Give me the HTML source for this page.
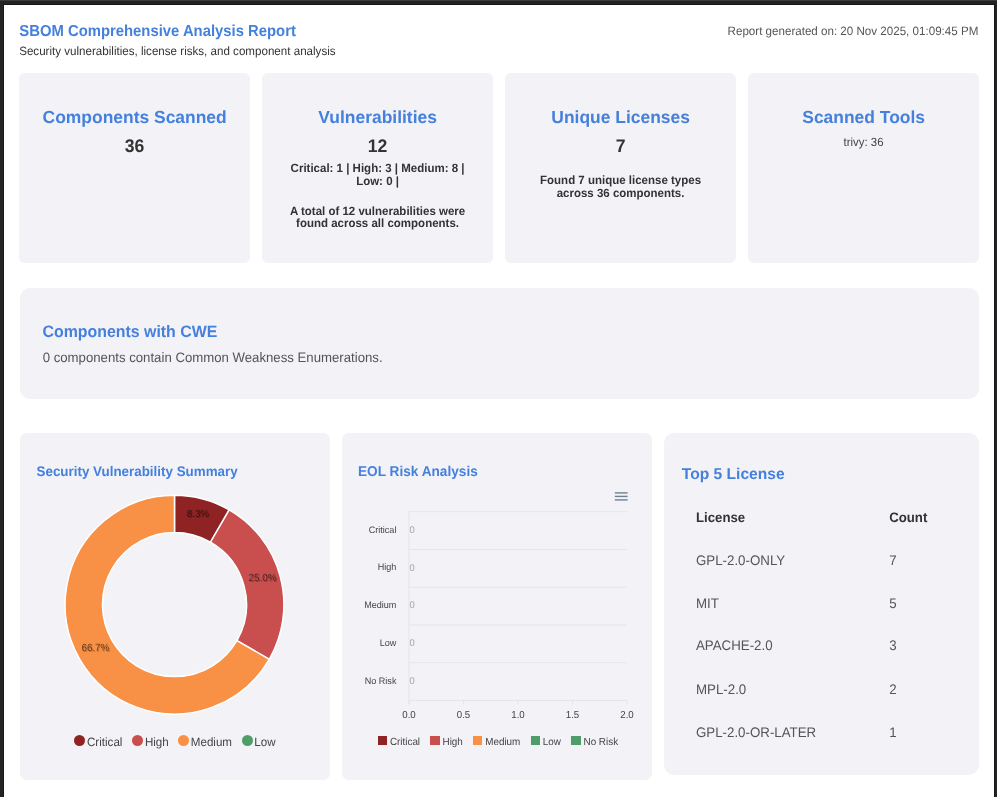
<!DOCTYPE html>
<html><head><meta charset="utf-8"><title>SBOM Comprehensive Analysis Report</title>
<style>
html,body{margin:0;padding:0;}
body{width:997px;height:797px;position:relative;overflow:hidden;background:#232323;font-family:"Liberation Sans",sans-serif;}
.page{position:absolute;left:4px;top:5px;width:990px;height:792px;background:#fff;}
.t{position:absolute;line-height:1;white-space:nowrap;text-rendering:geometricPrecision;}
svg text{text-rendering:geometricPrecision;}
.r{position:absolute;}
.s{position:absolute;left:0;top:0;}
#w{position:absolute;left:0;top:0;width:997px;height:797px;will-change:transform;}
.fl{position:absolute;background:#161616;}
</style></head><body>
<div class="fl" style="left:0;top:0;width:997px;height:1px;background:#3a3a3a"></div>
<div class="fl" style="left:3px;top:4px;width:992px;height:1px"></div>
<div class="fl" style="left:3px;top:4px;width:1px;height:793px"></div>
<div class="fl" style="left:994px;top:4px;width:1px;height:793px"></div>
<div class="page"></div>
<div id="w">
<div class="t" id="t0" style="left:19.30px;top:25.13px;font-size:14.85px;font-weight:bold;color:#4580dc;transform:scaleY(1.07);transform-origin:0 12.57px;">SBOM Comprehensive Analysis Report</div>
<div class="t" id="t1" style="left:19.20px;top:45.88px;font-size:11.6px;font-weight:normal;color:#333;transform:scaleY(1.04);transform-origin:0 9.82px;">Security vulnerabilities, license risks, and component analysis</div>
<div class="t" id="t2" style="right:18.70px;top:25.58px;font-size:11.6px;font-weight:normal;color:#555;transform:scaleY(1.04);transform-origin:0 9.82px;">Report generated on: 20 Nov 2025, 01:09:45 PM</div>
<div class="r" style="left:19.4px;top:72.9px;width:230.30px;height:189.70px;border-radius:6px;background:#f2f2f7"></div>
<div class="t" id="t3" style="left:-165.35px;width:600px;text-align:center;top:109.03px;font-size:17.45px;font-weight:bold;color:#4580dc;">Components Scanned</div>
<div class="t" id="t4" style="left:-165.45px;width:600px;text-align:center;top:138.00px;font-size:17.6px;font-weight:bold;color:#333;transform:scaleY(1.04);transform-origin:0 14.90px;">36</div>
<div class="r" style="left:262.4px;top:72.9px;width:230.30px;height:189.70px;border-radius:6px;background:#f2f2f7"></div>
<div class="t" id="t5" style="left:77.65px;width:600px;text-align:center;top:109.03px;font-size:17.45px;font-weight:bold;color:#4580dc;">Vulnerabilities</div>
<div class="t" id="t6" style="left:77.55px;width:600px;text-align:center;top:138.00px;font-size:17.6px;font-weight:bold;color:#333;transform:scaleY(1.04);transform-origin:0 14.90px;">12</div>
<div class="t" id="t7" style="left:77.55px;width:600px;text-align:center;top:163.87px;font-size:11.5px;font-weight:bold;color:#333;transform:scaleY(1.04);transform-origin:0 9.73px;">Critical: 1 | High: 3 | Medium: 8 |</div>
<div class="t" id="t8" style="left:77.55px;width:600px;text-align:center;top:176.97px;font-size:11.5px;font-weight:bold;color:#333;transform:scaleY(1.04);transform-origin:0 9.73px;">Low: 0 |</div>
<div class="t" id="t9" style="left:77.55px;width:600px;text-align:center;top:206.97px;font-size:11.5px;font-weight:bold;color:#333;transform:scaleY(1.04);transform-origin:0 9.73px;">A total of 12 vulnerabilities were</div>
<div class="t" id="t10" style="left:77.55px;width:600px;text-align:center;top:218.67px;font-size:11.5px;font-weight:bold;color:#333;transform:scaleY(1.04);transform-origin:0 9.73px;">found across all components.</div>
<div class="r" style="left:505.4px;top:72.9px;width:230.30px;height:189.70px;border-radius:6px;background:#f2f2f7"></div>
<div class="t" id="t11" style="left:320.65px;width:600px;text-align:center;top:109.03px;font-size:17.45px;font-weight:bold;color:#4580dc;">Unique Licenses</div>
<div class="t" id="t12" style="left:320.55px;width:600px;text-align:center;top:138.00px;font-size:17.6px;font-weight:bold;color:#333;transform:scaleY(1.04);transform-origin:0 14.90px;">7</div>
<div class="t" id="t13" style="left:320.55px;width:600px;text-align:center;top:176.47px;font-size:11.5px;font-weight:bold;color:#333;transform:scaleY(1.04);transform-origin:0 9.73px;">Found 7 unique license types</div>
<div class="t" id="t14" style="left:320.55px;width:600px;text-align:center;top:189.27px;font-size:11.5px;font-weight:bold;color:#333;transform:scaleY(1.04);transform-origin:0 9.73px;">across 36 components.</div>
<div class="r" style="left:748.4px;top:72.9px;width:230.30px;height:189.70px;border-radius:6px;background:#f2f2f7"></div>
<div class="t" id="t15" style="left:563.65px;width:600px;text-align:center;top:109.03px;font-size:17.45px;font-weight:bold;color:#4580dc;">Scanned Tools</div>
<div class="t" id="t16" style="left:563.55px;width:600px;text-align:center;top:137.65px;font-size:11.4px;font-weight:normal;color:#444;transform:scaleY(1.04);transform-origin:0 9.65px;">trivy: 36</div>
<div class="r" style="left:19.5px;top:288.0px;width:959.10px;height:111.30px;border-radius:10px;background:#f2f2f7"></div>
<div class="t" id="t17" style="left:42.50px;top:325.04px;font-size:15.9px;font-weight:bold;color:#4580dc;transform:scaleY(1.04);transform-origin:0 13.46px;">Components with CWE</div>
<div class="t" id="t18" style="left:42.70px;top:351.33px;font-size:13.2px;font-weight:normal;color:#555;transform:scaleY(1.04);transform-origin:0 11.17px;">0 components contain Common Weakness Enumerations.</div>
<div class="r" style="left:19.6px;top:432.7px;width:310.00px;height:347.20px;border-radius:7px;background:#f2f2f7"></div>
<div class="r" style="left:342.1px;top:432.7px;width:309.70px;height:347.20px;border-radius:7px;background:#f2f2f7"></div>
<div class="r" style="left:664.4px;top:432.8px;width:314.30px;height:341.80px;border-radius:10px;background:#f2f2f7"></div>
<div class="t" id="t19" style="left:36.50px;top:464.56px;font-size:13.4px;font-weight:bold;color:#4580dc;transform:scaleY(1.04);transform-origin:0 11.34px;">Security Vulnerability Summary</div>
<div class="t" id="t20" style="left:358.00px;top:464.75px;font-size:13.65px;font-weight:bold;color:#4580dc;transform:scaleY(1.04);transform-origin:0 11.55px;">EOL Risk Analysis</div>
<div class="t" id="t21" style="left:681.80px;top:467.09px;font-size:15.6px;font-weight:bold;color:#4580dc;">Top 5 License</div>
<svg class="s" width="997" height="797" viewBox="0 0 997 797">
<defs><filter id="sh" x="-50%" y="-50%" width="200%" height="200%"><feGaussianBlur in="SourceAlpha" stdDeviation="0.7"/><feOffset dx="0.7" dy="0.7" result="b"/><feFlood flood-color="#000" flood-opacity="0.45"/><feComposite in2="b" operator="in" result="s"/><feMerge><feMergeNode in="s"/><feMergeNode in="SourceGraphic"/></feMerge></filter></defs>
<path d="M174.500,495.200 A109.4,109.4 0 0 1 229.200,509.857 L210.500,542.246 A72.0,72.0 0 0 0 174.500,532.600 Z" fill="#8f2323" stroke="#fff" stroke-width="1.5"/>
<path d="M229.200,509.857 A109.4,109.4 0 0 1 269.243,659.300 L236.854,640.600 A72.0,72.0 0 0 0 210.500,542.246 Z" fill="#c94f4f" stroke="#fff" stroke-width="1.5"/>
<path d="M269.243,659.300 A109.4,109.4 0 1 1 174.500,495.200 L174.500,532.600 A72.0,72.0 0 1 0 236.854,640.600 Z" fill="#f89146" stroke="#fff" stroke-width="1.5"/>
<text x="197.9" y="516.6" text-anchor="middle" font-family="Liberation Sans" font-size="9.9" font-weight="normal" fill="#000" fill-opacity="0.55" filter="url(#sh)" transform="translate(0 516.6) scale(1 1.06) translate(0 -516.6)">8.3%</text>
<text x="262.5" y="581.3" text-anchor="middle" font-family="Liberation Sans" font-size="9.9" font-weight="normal" fill="#000" fill-opacity="0.55" filter="url(#sh)" transform="translate(0 581.3) scale(1 1.06) translate(0 -581.3)">25.0%</text>
<text x="95.4" y="650.6" text-anchor="middle" font-family="Liberation Sans" font-size="9.9" font-weight="normal" fill="#000" fill-opacity="0.55" filter="url(#sh)" transform="translate(0 650.6) scale(1 1.06) translate(0 -650.6)">66.7%</text>
<line x1="409.0" y1="511.70" x2="627.0" y2="511.70" stroke="#e2e2e6" stroke-width="0.8"/>
<line x1="409.0" y1="549.45" x2="627.0" y2="549.45" stroke="#e2e2e6" stroke-width="0.8"/>
<line x1="409.0" y1="587.20" x2="627.0" y2="587.20" stroke="#e2e2e6" stroke-width="0.8"/>
<line x1="409.0" y1="624.95" x2="627.0" y2="624.95" stroke="#e2e2e6" stroke-width="0.8"/>
<line x1="409.0" y1="662.70" x2="627.0" y2="662.70" stroke="#e2e2e6" stroke-width="0.8"/>
<line x1="409.0" y1="700.45" x2="627.0" y2="700.45" stroke="#e2e2e6" stroke-width="0.8"/>
<line x1="409.0" y1="511.7" x2="409.0" y2="704.4" stroke="#e2e2e6" stroke-width="0.8"/>
<line x1="409.00" y1="700.45" x2="409.00" y2="704.4" stroke="#e2e2e6" stroke-width="0.8"/>
<line x1="463.50" y1="700.45" x2="463.50" y2="704.4" stroke="#e2e2e6" stroke-width="0.8"/>
<line x1="518.00" y1="700.45" x2="518.00" y2="704.4" stroke="#e2e2e6" stroke-width="0.8"/>
<line x1="572.50" y1="700.45" x2="572.50" y2="704.4" stroke="#e2e2e6" stroke-width="0.8"/>
<line x1="627.00" y1="700.45" x2="627.00" y2="704.4" stroke="#e2e2e6" stroke-width="0.8"/>
<line x1="614.8" y1="492.9" x2="627.6" y2="492.9" stroke="#6e8192" stroke-width="1.4"/>
<line x1="614.8" y1="496.4" x2="627.6" y2="496.4" stroke="#6e8192" stroke-width="1.4"/>
<line x1="614.8" y1="499.9" x2="627.6" y2="499.9" stroke="#6e8192" stroke-width="1.4"/>
</svg>
<div class="t" id="t22" style="right:600.60px;top:525.84px;font-size:9.05px;font-weight:normal;color:#444;transform:scaleY(1.04);transform-origin:0 7.66px;">Critical</div>
<div class="t" id="t23" style="left:409.50px;top:524.94px;font-size:9.4px;font-weight:normal;color:#a8a8a8;transform:scaleY(1.04);transform-origin:0 7.96px;">0</div>
<div class="t" id="t24" style="right:600.60px;top:562.59px;font-size:9.05px;font-weight:normal;color:#444;transform:scaleY(1.04);transform-origin:0 7.66px;">High</div>
<div class="t" id="t25" style="left:409.50px;top:562.69px;font-size:9.4px;font-weight:normal;color:#a8a8a8;transform:scaleY(1.04);transform-origin:0 7.96px;">0</div>
<div class="t" id="t26" style="right:600.60px;top:601.34px;font-size:9.05px;font-weight:normal;color:#444;transform:scaleY(1.04);transform-origin:0 7.66px;">Medium</div>
<div class="t" id="t27" style="left:409.50px;top:600.44px;font-size:9.4px;font-weight:normal;color:#a8a8a8;transform:scaleY(1.04);transform-origin:0 7.96px;">0</div>
<div class="t" id="t28" style="right:600.60px;top:639.09px;font-size:9.05px;font-weight:normal;color:#444;transform:scaleY(1.04);transform-origin:0 7.66px;">Low</div>
<div class="t" id="t29" style="left:409.50px;top:638.19px;font-size:9.4px;font-weight:normal;color:#a8a8a8;transform:scaleY(1.04);transform-origin:0 7.96px;">0</div>
<div class="t" id="t30" style="right:600.60px;top:676.84px;font-size:9.05px;font-weight:normal;color:#444;transform:scaleY(1.04);transform-origin:0 7.66px;">No Risk</div>
<div class="t" id="t31" style="left:409.50px;top:675.94px;font-size:9.4px;font-weight:normal;color:#a8a8a8;transform:scaleY(1.04);transform-origin:0 7.96px;">0</div>
<div class="t" id="t32" style="left:109.00px;width:600px;text-align:center;top:710.99px;font-size:9.7px;font-weight:normal;color:#444;transform:scaleY(1.04);transform-origin:0 8.21px;">0.0</div>
<div class="t" id="t33" style="left:163.50px;width:600px;text-align:center;top:710.99px;font-size:9.7px;font-weight:normal;color:#444;transform:scaleY(1.04);transform-origin:0 8.21px;">0.5</div>
<div class="t" id="t34" style="left:218.00px;width:600px;text-align:center;top:710.99px;font-size:9.7px;font-weight:normal;color:#444;transform:scaleY(1.04);transform-origin:0 8.21px;">1.0</div>
<div class="t" id="t35" style="left:272.50px;width:600px;text-align:center;top:710.99px;font-size:9.7px;font-weight:normal;color:#444;transform:scaleY(1.04);transform-origin:0 8.21px;">1.5</div>
<div class="t" id="t36" style="left:327.00px;width:600px;text-align:center;top:710.99px;font-size:9.7px;font-weight:normal;color:#444;transform:scaleY(1.04);transform-origin:0 8.21px;">2.0</div>
<div class="r" style="left:377.5px;top:735.8px;width:9.40px;height:9.10px;border-radius:0px;background:#8f2323"></div>
<div class="t" id="t37" style="left:389.90px;top:738.22px;font-size:9.9px;font-weight:normal;color:#444;transform:scaleY(1.04);transform-origin:0 8.38px;">Critical</div>
<div class="r" style="left:430.2px;top:735.8px;width:9.40px;height:9.10px;border-radius:0px;background:#c94f4f"></div>
<div class="t" id="t38" style="left:442.50px;top:738.22px;font-size:9.9px;font-weight:normal;color:#444;transform:scaleY(1.04);transform-origin:0 8.38px;">High</div>
<div class="r" style="left:473.1px;top:735.8px;width:9.40px;height:9.10px;border-radius:0px;background:#f89146"></div>
<div class="t" id="t39" style="left:485.20px;top:738.22px;font-size:9.9px;font-weight:normal;color:#444;transform:scaleY(1.04);transform-origin:0 8.38px;">Medium</div>
<div class="r" style="left:530.7px;top:735.8px;width:9.40px;height:9.10px;border-radius:0px;background:#4f9d6b"></div>
<div class="t" id="t40" style="left:542.80px;top:738.22px;font-size:9.9px;font-weight:normal;color:#444;transform:scaleY(1.04);transform-origin:0 8.38px;">Low</div>
<div class="r" style="left:571.4px;top:735.8px;width:9.40px;height:9.10px;border-radius:0px;background:#4f9d6b"></div>
<div class="t" id="t41" style="left:583.50px;top:738.22px;font-size:9.9px;font-weight:normal;color:#444;transform:scaleY(1.04);transform-origin:0 8.38px;">No Risk</div>
<div class="r" style="left:74.39999999999999px;top:734.8000000000001px;width:10.80px;height:10.80px;border-radius:6px;background:#8f2323"></div>
<div class="t" id="t42" style="left:87.00px;top:736.88px;font-size:11.6px;font-weight:normal;color:#444;transform:scaleY(1.04);transform-origin:0 9.82px;">Critical</div>
<div class="r" style="left:132.1px;top:734.8000000000001px;width:10.80px;height:10.80px;border-radius:6px;background:#c94f4f"></div>
<div class="t" id="t43" style="left:144.90px;top:736.88px;font-size:11.6px;font-weight:normal;color:#444;transform:scaleY(1.04);transform-origin:0 9.82px;">High</div>
<div class="r" style="left:178.2px;top:734.8000000000001px;width:10.80px;height:10.80px;border-radius:6px;background:#f89146"></div>
<div class="t" id="t44" style="left:190.80px;top:736.88px;font-size:11.6px;font-weight:normal;color:#444;transform:scaleY(1.04);transform-origin:0 9.82px;">Medium</div>
<div class="r" style="left:241.9px;top:734.8000000000001px;width:10.80px;height:10.80px;border-radius:6px;background:#4f9d6b"></div>
<div class="t" id="t45" style="left:254.30px;top:736.88px;font-size:11.6px;font-weight:normal;color:#444;transform:scaleY(1.04);transform-origin:0 9.82px;">Low</div>
<div class="t" id="t46" style="left:696.00px;top:511.33px;font-size:13.2px;font-weight:bold;color:#333;transform:scaleY(1.04);transform-origin:0 11.17px;">License</div>
<div class="t" id="t47" style="left:889.20px;top:511.33px;font-size:13.2px;font-weight:bold;color:#333;transform:scaleY(1.04);transform-origin:0 11.17px;">Count</div>
<div class="t" id="t48" style="left:696.00px;top:554.34px;font-size:13.3px;font-weight:normal;color:#555;transform:scaleY(1.04);transform-origin:0 11.26px;">GPL-2.0-ONLY</div>
<div class="t" id="t49" style="left:889.20px;top:554.34px;font-size:13.3px;font-weight:normal;color:#555;transform:scaleY(1.04);transform-origin:0 11.26px;">7</div>
<div class="t" id="t50" style="left:696.00px;top:597.44px;font-size:13.3px;font-weight:normal;color:#555;transform:scaleY(1.04);transform-origin:0 11.26px;">MIT</div>
<div class="t" id="t51" style="left:889.20px;top:597.44px;font-size:13.3px;font-weight:normal;color:#555;transform:scaleY(1.04);transform-origin:0 11.26px;">5</div>
<div class="t" id="t52" style="left:696.00px;top:639.14px;font-size:13.3px;font-weight:normal;color:#555;transform:scaleY(1.04);transform-origin:0 11.26px;">APACHE-2.0</div>
<div class="t" id="t53" style="left:889.20px;top:639.14px;font-size:13.3px;font-weight:normal;color:#555;transform:scaleY(1.04);transform-origin:0 11.26px;">3</div>
<div class="t" id="t54" style="left:696.00px;top:683.24px;font-size:13.3px;font-weight:normal;color:#555;transform:scaleY(1.04);transform-origin:0 11.26px;">MPL-2.0</div>
<div class="t" id="t55" style="left:889.20px;top:683.24px;font-size:13.3px;font-weight:normal;color:#555;transform:scaleY(1.04);transform-origin:0 11.26px;">2</div>
<div class="t" id="t56" style="left:696.00px;top:725.64px;font-size:13.3px;font-weight:normal;color:#555;transform:scaleY(1.04);transform-origin:0 11.26px;">GPL-2.0-OR-LATER</div>
<div class="t" id="t57" style="left:889.20px;top:725.64px;font-size:13.3px;font-weight:normal;color:#555;transform:scaleY(1.04);transform-origin:0 11.26px;">1</div>
</div>
</body></html>
